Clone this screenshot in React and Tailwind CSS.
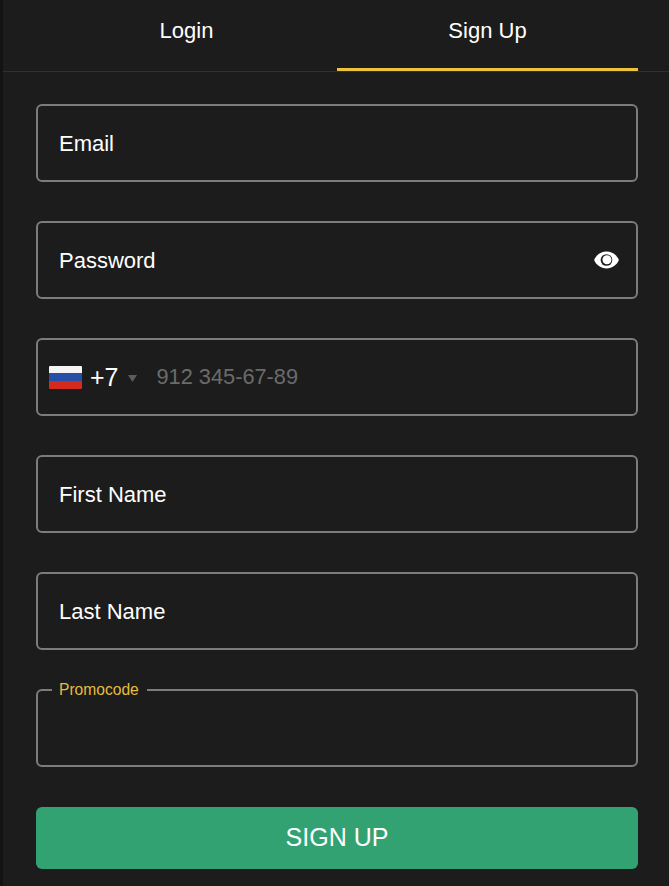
function Field({ label, children }) {
  return (
    <div className="relative flex h-[78px] items-center rounded-[6px] border-2 border-[#7c7c7c] px-[21px] text-[22px] text-white">
      {label}
      {children}
    </div>
  )
}

function RussianFlag() {
  return (
    <div className="flex h-[23px] w-[33px] flex-col overflow-hidden rounded-[1px]">
      <div className="flex-1 bg-[#f4f4f4]" />
      <div className="flex-1 bg-[#2450a8]" />
      <div className="flex-1 bg-[#d52b1e]" />
    </div>
  )
}

function EyeIcon() {
  return (
    <svg className="absolute right-[16px] top-1/2 -translate-y-1/2" width="27" height="27" viewBox="0 0 24 24">
      <path
        d="M12 4.5C7 4.5 2.73 7.61 1 12c1.73 4.39 6 7.5 11 7.5s9.27-3.11 11-7.5c-1.73-4.39-6-7.5-11-7.5z"
        fill="#fff"
      />
      <circle cx="12" cy="12" r="5.2" fill="#1c1c1c" />
      <circle cx="12.4" cy="11.8" r="4" fill="#fff" />
    </svg>
  )
}

export default function App() {
  return (
    <div className="h-[886px] overflow-hidden border-l-[3px] border-[#131313] bg-[#1c1c1c] font-['Liberation_Sans',Arial,sans-serif]">
      <div className="border-b border-[#303030]">
        <div className="grid h-[71px] grid-cols-2 pl-[33px] pr-[31px] text-[22px] text-white">
          <button className="flex items-center justify-center pb-[10px]">Login</button>
          <button className="flex items-center justify-center border-b-[3px] border-[#eec23c] pb-[7px]">Sign Up</button>
        </div>
      </div>

      <div className="flex flex-col gap-[39px] pl-[33px] pr-[31px] pt-[32px]">
        <Field label="Email" />
        <Field label="Password">
          <EyeIcon />
        </Field>

        <div className="flex h-[78px] items-center rounded-[6px] border-2 border-[#7c7c7c] pl-[11px] text-white">
          <RussianFlag />
          <span className="ml-[8px] text-[25px] leading-none">+7</span>
          <svg className="ml-[9px] mt-[3px]" width="9" height="7" viewBox="0 0 9 7">
            <path d="M0 0h9L4.5 7z" fill="#5c5c5c" />
          </svg>
          <span className="ml-[20px] text-[21.75px] text-[#6b6b6b]">912 345-67-89</span>
        </div>

        <Field label="First Name" />
        <Field label="Last Name" />
        <Field>
          <span className="absolute left-[14px] top-[-10px] bg-[#1c1c1c] pl-[7px] pr-[8px] text-[15.6px] leading-[18px] text-[#e6bc3e]">
            Promocode
          </span>
        </Field>

        <button className="mt-[1px] h-[62px] rounded-[6px] bg-[#32a273] text-[25px] text-white">SIGN UP</button>
      </div>
    </div>
  )
}
